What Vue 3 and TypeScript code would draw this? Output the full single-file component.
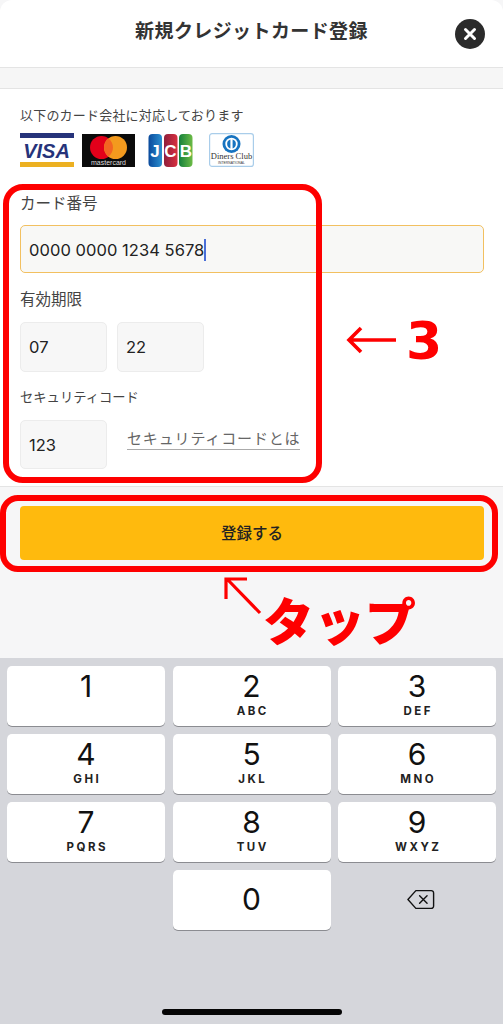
<script setup lang="ts">
const keys = [
  { d: '1', l: '' }, { d: '2', l: 'ABC' }, { d: '3', l: 'DEF' },
  { d: '4', l: 'GHI' }, { d: '5', l: 'JKL' }, { d: '6', l: 'MNO' },
  { d: '7', l: 'PQRS' }, { d: '8', l: 'TUV' }, { d: '9', l: 'WXYZ' },
]
</script>

<template>
  <div class="screen">
    <header class="head">
      <h1 class="title">新規クレジットカード登録</h1>
      <button class="close" aria-label="閉じる">
        <svg width="14" height="14" viewBox="0 0 14 14"><path d="M2.5 2.5 11.5 11.5M11.5 2.5 2.5 11.5" stroke="#fff" stroke-width="3" stroke-linecap="round" /></svg>
      </button>
    </header>
    <div class="strip"></div>

    <section class="form">
      <p class="note">以下のカード会社に対応しております</p>
      <div class="brands">
        <svg class="visa" width="54" height="34" viewBox="0 0 54 34">
          <rect width="54" height="5" fill="#26337a" />
          <rect y="29" width="54" height="5" fill="#ecb021" />
          <text x="26.5" y="24.5" text-anchor="middle" class="visa-t">VISA</text>
        </svg>
        <svg class="mc" width="53" height="33" viewBox="0 0 53 33">
          <rect width="53" height="33" fill="#0b0b0b" />
          <circle cx="19.5" cy="13.5" r="11.5" fill="#e2001a" />
          <circle cx="33.5" cy="13.5" r="11.5" fill="#f39a1e" />
          <path d="M26.5 4.4a11.5 11.5 0 0 1 0 18.2a11.5 11.5 0 0 1 0-18.2z" fill="#f26522" />
          <text x="26.5" y="30.5" text-anchor="middle" class="mc-t">mastercard</text>
        </svg>
        <svg class="jcb" width="45" height="33" viewBox="0 0 45 33">
          <defs>
            <linearGradient id="jb" x1="0" x2="1" y1="0" y2="0"><stop offset="0" stop-color="#0a4a9c" /><stop offset="1" stop-color="#2a8fd0" /></linearGradient>
            <linearGradient id="jr" x1="0" x2="1" y1="0" y2="0"><stop offset="0" stop-color="#8e1f3c" /><stop offset="1" stop-color="#d8303f" /></linearGradient>
            <linearGradient id="jg" x1="0" x2="1" y1="0" y2="0"><stop offset="0" stop-color="#14803c" /><stop offset="1" stop-color="#6cbb45" /></linearGradient>
          </defs>
          <rect x="0.5" width="13.5" height="33" rx="4" fill="url(#jb)" />
          <rect x="16" width="13.5" height="33" rx="4" fill="url(#jr)" />
          <rect x="31" width="13.5" height="33" rx="4" fill="url(#jg)" />
          <text x="7" y="23" text-anchor="middle" class="jcb-t">J</text>
          <text x="22.5" y="23" text-anchor="middle" class="jcb-t">C</text>
          <text x="38" y="23" text-anchor="middle" class="jcb-t">B</text>
        </svg>
        <svg class="diners" width="45" height="34" viewBox="0 0 45 34">
          <rect x="0.6" y="0.6" width="43.8" height="32.8" rx="2.5" fill="#fff" stroke="#a9cdea" stroke-width="1.2" />
          <circle cx="22.5" cy="11" r="9" fill="#1673c0" />
          <circle cx="22.5" cy="11" r="6.2" fill="#fff" />
          <path d="M21.4 6.6v8.8a4.6 4.6 0 0 1 0-8.8zM23.6 6.6v8.8a4.6 4.6 0 0 0 0-8.8z" fill="#1673c0" />
          <text x="22.5" y="26" text-anchor="middle" class="din-t">Diners Club</text>
          <text x="22.5" y="30.5" text-anchor="middle" class="din-s">INTERNATIONAL</text>
        </svg>
      </div>

      <label class="label l-card">カード番号</label>
      <div class="field wide"><span>0000 0000 1234 5678</span><i class="caret"></i></div>

      <label class="label l-exp">有効期限</label>
      <div class="row">
        <div class="field small">07</div>
        <div class="field small">22</div>
      </div>

      <label class="label l-sec">セキュリティコード</label>
      <div class="row sec">
        <div class="field small s49">123</div>
        <a class="what">セキュリティコードとは</a>
      </div>
    </section>

    <section class="action">
      <button class="submit">登録する</button>
    </section>

    <section class="keyboard">
      <div class="keys">
        <div v-for="k in keys" :key="k.d" class="key">
          <span class="digit">{{ k.d }}</span>
          <span class="letters">{{ k.l }}</span>
        </div>
        <div class="blank"></div>
        <div class="key zero"><span class="digit">0</span></div>
        <div class="blank del">
          <svg width="28" height="21" viewBox="0 0 30 22" fill="none" stroke="#111" stroke-width="1.5" stroke-linejoin="round" stroke-linecap="round">
            <path d="M9.5 1.5h16.5a2.5 2.5 0 0 1 2.5 2.5v14a2.5 2.5 0 0 1-2.5 2.5H9.5L1 11z" />
            <path d="M13.5 7l8 8M21.5 7l-8 8" />
          </svg>
        </div>
      </div>
      <div class="home"></div>
    </section>

    <div class="mark mark-form"></div>
    <div class="mark mark-btn"></div>
    <svg class="arr arr-left" width="52" height="30" viewBox="0 0 52 30" fill="none" stroke="#fe0000" stroke-width="3.6">
      <path d="M50 15H3M15 3 3 15l12 12" />
    </svg>
    <span class="big three">3</span>
    <svg class="arr arr-up" width="40" height="40" viewBox="0 0 40 40" fill="none" stroke="#fe0000" stroke-width="3.2">
      <path d="M37 37 5 4M3 23 3 3h21" />
    </svg>
    <span class="big tap">タップ</span>
  </div>
</template>

<style>
html, body { margin: 0; padding: 0; background: #fff; }
</style>

<style scoped>
.screen {
  position: relative;
  width: 503px;
  height: 1024px;
  overflow: hidden;
  background: #f6f6f7;
  font-family: Inter, "Noto Sans CJK JP", "Noto Sans", sans-serif;
  color: #222;
}
.head {
  position: relative;
  height: 67px;
  background: #fff;
  border-radius: 12px 12px 0 0;
  border-bottom: 1px solid #e4e4e4;
  display: flex;
  align-items: center;
  justify-content: center;
}
.title {
  margin: 0 0 4px;
  font-size: 19px;
  font-weight: 700;
  color: #333;
  line-height: 26px;
  letter-spacing: 0.4px;
}
.close {
  position: absolute;
  right: 18px;
  top: 19px;
  width: 30px;
  height: 30px;
  padding: 0;
  border: 0;
  border-radius: 50%;
  background: #2b2b2b;
  display: flex;
  align-items: center;
  justify-content: center;
}
.strip {
  height: 20px;
  background: #f6f6f6;
  border-bottom: 1px solid #e4e4e4;
}
.form {
  box-sizing: border-box;
  height: 398px;
  padding: 17px 19px 0 20px;
  background: #fff;
  border-bottom: 1px solid #e4e4e4;
}
.note {
  margin: 0;
  font-size: 13px;
  line-height: 18px;
  letter-spacing: 0.2px;
  color: #444;
}
.brands {
  display: flex;
  align-items: center;
  margin-top: 9px;
  height: 34px;
}
.mc { margin-left: 8px; }
.jcb { margin-left: 13px; }
.diners { margin-left: 16px; }
.visa-t { font: italic 700 20px "Liberation Sans", sans-serif; fill: #26337a; }
.mc-t { font: 400 7px "Liberation Sans", sans-serif; fill: #ddd; }
.jcb-t { font: 700 17px "Liberation Sans", sans-serif; fill: #fff; }
.din-t { font: 8.5px "Liberation Serif", serif; fill: #333; }
.din-s { font: 3.4px "Liberation Sans", sans-serif; fill: #333; }
.label {
  display: block;
  font-size: 15.5px;
  line-height: 20px;
  color: #444;
}
.l-card { margin-top: 27px; }
.l-exp { margin-top: 17px; }
.l-sec { margin-top: 15px; font-size: 13.3px; }
.field {
  box-sizing: border-box;
  display: flex;
  align-items: center;
  padding-left: 8px;
  background: #f7f7f7;
  border: 1px solid #ececec;
  border-radius: 5px;
  font-size: 16.5px;
  letter-spacing: 0.05px;
  color: #222;
}
.wide {
  width: 464px;
  height: 48px;
  margin-top: 11px;
  padding-top: 2px;
  border: 1.5px solid #f2c060;
  background: #f8f8f6;
}
.caret {
  display: inline-block;
  width: 2px;
  height: 22px;
  background: #4a6fd8;
}
.row {
  display: flex;
  gap: 10px;
  margin-top: 12px;
}
.small {
  width: 87px;
  height: 50px;
}
.s49 { height: 49px; }
.sec { margin-top: 13px; gap: 20px; }
.what {
  align-self: flex-start;
  margin-top: 7px;
  height: 22px;
  line-height: 24px;
  font-size: 15px;
  letter-spacing: 0.85px;
  color: #666;
  border-bottom: 1px solid #aaa;
  white-space: nowrap;
}
.action {
  padding: 19px 19px 0 20px;
}
.submit {
  display: block;
  width: 464px;
  height: 54px;
  padding: 0 0 2px;
  border: 0;
  border-radius: 4px;
  background: #ffba0d;
  font: 500 15.5px Inter, "Noto Sans CJK JP", sans-serif;
  color: #222;
}
.keyboard {
  position: absolute;
  left: 0;
  right: 0;
  bottom: 0;
  height: 366px;
  background: #d5d6db;
}
.keys {
  display: grid;
  grid-template-columns: repeat(3, 158px);
  grid-auto-rows: 60px;
  column-gap: 7.5px;
  row-gap: 8px;
  padding: 8px 7px 0;
}
.key {
  background: #fff;
  border-radius: 5px;
  box-shadow: 0 1px 0 #8b8c91;
  display: flex;
  flex-direction: column;
  align-items: center;
  color: #111;
}
.digit {
  font-size: 30px;
  line-height: 36px;
  margin-top: 2px;
  font-weight: 400;
}
.letters {
  font-size: 11.5px;
  font-weight: 700;
  line-height: 14px;
  letter-spacing: 2.5px;
  margin-right: -2.5px;
  color: #222;
}
.zero { justify-content: center; }
.zero .digit { margin-top: 0; margin-bottom: 2px; }
.del { display: flex; align-items: center; justify-content: center; padding: 0 0 2px 8px; }
.home {
  position: absolute;
  left: 162px;
  bottom: 9px;
  width: 180px;
  height: 6px;
  border-radius: 3px;
  background: #050505;
}
.mark {
  position: absolute;
  box-sizing: border-box;
  border: 6px solid #fe0000;
}
.mark-form {
  left: 3px;
  top: 184px;
  width: 319px;
  height: 299px;
  border-radius: 20px;
}
.mark-btn {
  left: 0;
  top: 495px;
  width: 498px;
  height: 77px;
  border-radius: 18px;
}
.arr { position: absolute; }
.arr-left { left: 346px; top: 325px; }
.arr-up { left: 223px; top: 576px; }
.big {
  position: absolute;
  color: #fe0000;
  font-weight: 700;
}
.three {
  left: 406px;
  top: 306px;
  font-family: "DejaVu Sans", sans-serif;
  font-size: 52px;
  line-height: 70px;
}
.tap {
  left: 263px;
  top: 584px;
  font-family: "Noto Sans CJK JP", sans-serif;
  font-weight: 900;
  font-size: 51px;
  line-height: 70px;
  white-space: nowrap;
}
</style>
